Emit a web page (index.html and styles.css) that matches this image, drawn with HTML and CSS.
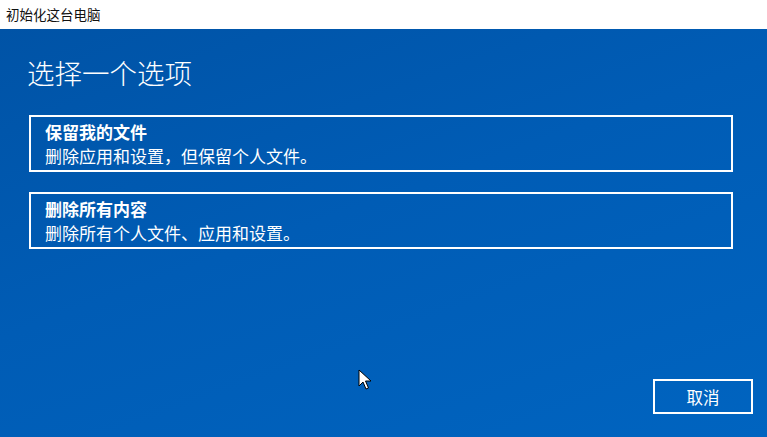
FILE: index.html
```html
<!DOCTYPE html>
<html>
<head>
  <meta charset="utf-8">
  <title>初始化这台电脑</title>
  <link rel="stylesheet" href="styles.css">
</head>
<body>
  <div class="window">
    <div class="title-bar">初始化这台电脑</div>
    <div class="content">
      <h1 class="heading">选择一个选项</h1>
      <div class="option">
        <div class="option-title">保留我的文件</div>
        <div class="option-desc">删除应用和设置，但保留个人文件。</div>
      </div>
      <div class="option">
        <div class="option-title">删除所有内容</div>
        <div class="option-desc">删除所有个人文件、应用和设置。</div>
      </div>
      <div class="footer">
        <button class="cancel">取消</button>
      </div>
      <svg class="cursor" width="14" height="22" viewBox="0 0 14 22">
        <path d="M1 1 L1 17 L5 13 L8 20 L10.5 19 L7.5 12 L13 12 Z" fill="#fff" stroke="#000" stroke-width="1"/>
      </svg>
    </div>
  </div>
</body>
</html>
```

FILE: styles.css
```css
html, body {
  margin: 0;
  padding: 0;
}
body {
  font-family: "Microsoft YaHei", "Noto Sans CJK SC", sans-serif;
  width: 767px;
  height: 437px;
  overflow: hidden;
}
.window {
  display: flex;
  flex-direction: column;
  height: 437px;
}
.title-bar {
  height: 29px;
  line-height: 28px;
  padding-left: 6px;
  font-size: 13.5px;
  color: #111;
  background: #fff;
}
.content {
  position: relative;
  flex: 1;
  padding: 0 34px 0 29px;
  background: linear-gradient(160deg, #0053a6 0%, #005cb5 45%, #0064c0 100%);
  color: #fff;
}
.heading {
  margin: 26px 0 0 -2px;
  font-size: 27.5px;
  font-weight: 300;
  line-height: 34px;
}
.option {
  margin-top: 26px;
  height: 57px;
  border: 2px solid #fff;
  padding: 3px 14px 0;
  box-sizing: border-box;
}
.option + .option {
  margin-top: 20px;
}
.option-title {
  font-size: 17px;
  font-weight: bold;
  line-height: 24px;
}
.option-desc {
  font-size: 17px;
  line-height: 24px;
}
.footer {
  display: flex;
  justify-content: flex-end;
  margin-top: 130px;
  margin-right: -20px;
}
.cancel {
  width: 100px;
  height: 35px;
  border: 2px solid #fff;
  background: transparent;
  color: #fff;
  font-family: inherit;
  font-size: 16.5px;
  padding: 0;
}
.cursor {
  position: absolute;
  left: 358px;
  top: 340px;
}
```
